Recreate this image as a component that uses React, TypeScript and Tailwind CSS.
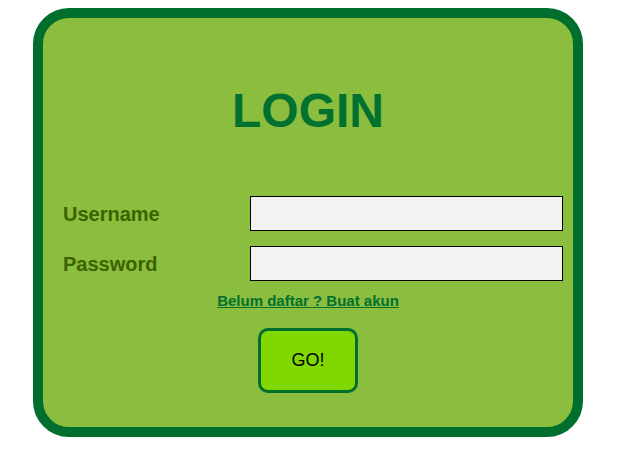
import React from "react";

export default function App() {
  return (
    <div className="min-h-screen bg-white pl-[33px] pt-[8px] font-['Liberation_Sans',Arial,sans-serif]">
      <form
        className="w-[550px] h-[429px] border-[10px] border-[#006f2e] rounded-[36px] bg-[#8bbd3e] flex flex-col"
        onSubmit={(e) => e.preventDefault()}
      >
        {/* Title */}
        <h1 className="mt-[65px] text-center text-[48px] leading-[55px] font-bold text-[#00712f]">
          LOGIN
        </h1>

        {/* Fields */}
        <div className="mt-[58px] flex flex-col gap-[15px] pl-[20px] pr-[10px]">
          <div className="flex items-center">
            <label className="w-[187px] text-[20px] font-bold text-[#3b6300]">Username</label>
            <input
              type="text"
              className="w-[313px] h-[35px] border border-black bg-[#f2f2f2] outline-none px-1"
            />
          </div>
          <div className="flex items-center">
            <label className="w-[187px] text-[20px] font-bold text-[#3b6300]">Password</label>
            <input
              type="password"
              className="w-[313px] h-[35px] border border-black bg-[#f2f2f2] outline-none px-1"
            />
          </div>
        </div>

        {/* Register link */}
        <div className="mt-[8px] text-center">
          <a href="#" className="text-[15px] font-bold underline text-[#00712f]">
            Belum daftar ? Buat akun
          </a>
        </div>

        {/* Submit */}
        <div className="mt-[15px] flex justify-center">
          <button
            type="submit"
            className="w-[100px] h-[65px] border-[3px] border-[#006f2e] rounded-[10px] bg-[#80d800] text-[18px] text-black"
          >
            GO!
          </button>
        </div>
      </form>
    </div>
  );
}
